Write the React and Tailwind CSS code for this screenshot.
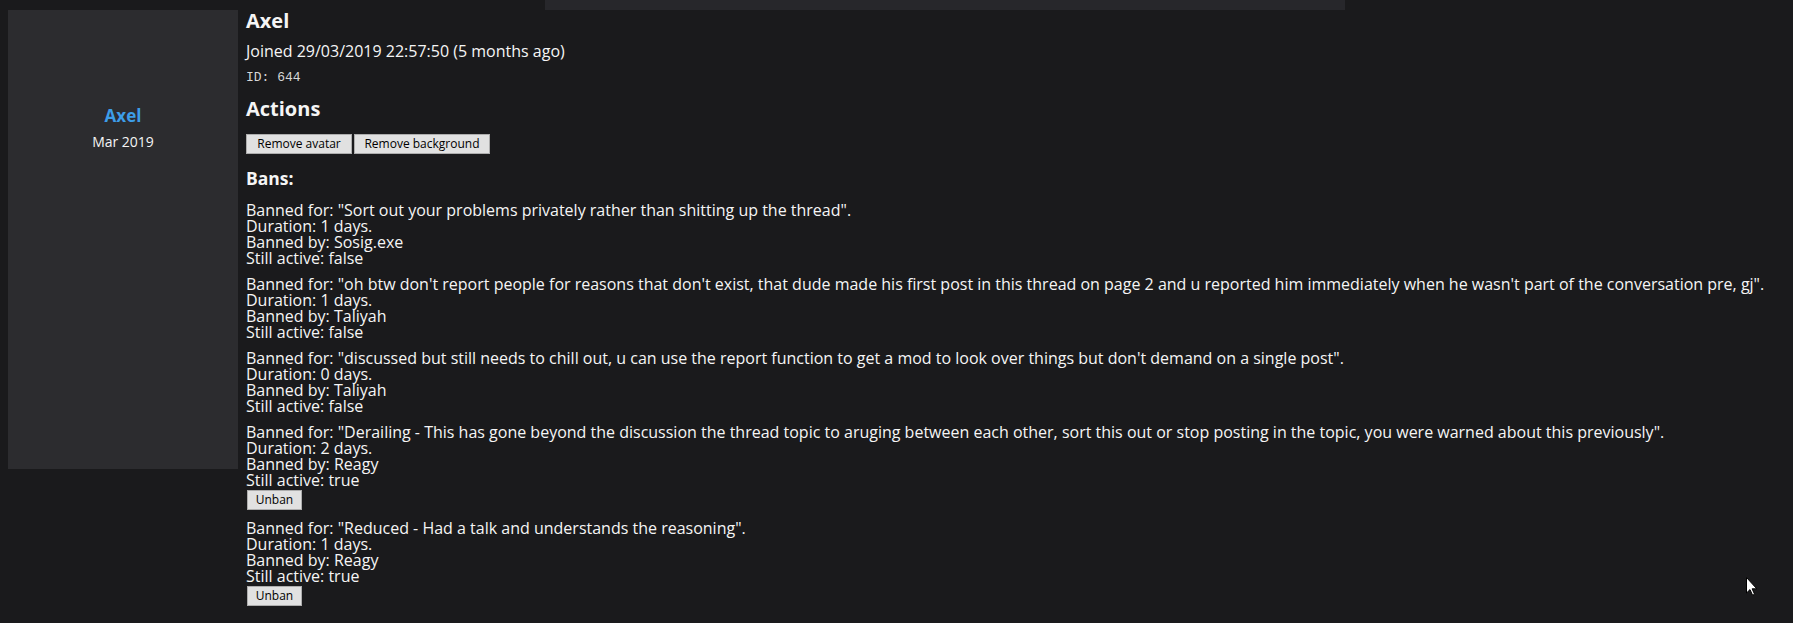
const bans = [
  {
    reason: "Sort out your problems privately rather than shitting up the thread",
    days: 1,
    by: "Sosig.exe",
    active: false,
  },
  {
    reason:
      "oh btw don't report people for reasons that don't exist, that dude made his first post in this thread on page 2 and u reported him immediately when he wasn't part of the conversation pre, gj",
    days: 1,
    by: "Taliyah",
    active: false,
  },
  {
    reason:
      "discussed but still needs to chill out, u can use the report function to get a mod to look over things but don't demand on a single post",
    days: 0,
    by: "Taliyah",
    active: false,
  },
  {
    reason:
      "Derailing - This has gone beyond the discussion the thread topic to aruging between each other, sort this out or stop posting in the topic, you were warned about this previously",
    days: 2,
    by: "Reagy",
    active: true,
  },
  {
    reason: "Reduced - Had a talk and understands the reasoning",
    days: 1,
    by: "Reagy",
    active: true,
  },
];

function Btn({ children, className = "" }) {
  return (
    <button
      className={
        "h-[20px] bg-[#e1e1e1] border border-[#adadad] text-black text-[12px] leading-none text-center " +
        className
      }
    >
      {children}
    </button>
  );
}

function Cursor() {
  return (
    <svg
      className="absolute left-[1746px] top-[577px]"
      width="12"
      height="19"
      viewBox="0 0 12 19"
    >
      <path
        d="M0.5 0.5 L0.5 16 L4 12.6 L6.6 18.2 L8.6 17.3 L6.1 11.8 L10.8 11.8 Z"
        fill="#fff"
        stroke="#000"
        strokeWidth="1"
      />
    </svg>
  );
}

export default function App() {
  return (
    <div className="relative w-[1793px] h-[623px] overflow-hidden bg-[#1a1a1c] text-[#f5f5f5] font-['Open_Sans',sans-serif]">
      {/* bottom edge of the box above */}
      <div className="ml-[545px] w-[800px] h-[10px] bg-[#27272b]" />

      <div className="flex items-start">
        {/* user card */}
        <div className="ml-[8px] w-[230px] h-[459px] bg-[#2c2c2f] flex flex-col items-center pt-[96px]">
          <div className="text-[17px] leading-[20px] font-bold text-[#3d9de8]">Axel</div>
          <div className="mt-[6px] text-[14px] leading-[20px]">Mar 2019</div>
        </div>

        <div className="ml-[8px] pt-[1px] flex flex-col items-start">
          <h2 className="text-[20px] leading-[20px] font-bold">Axel</h2>
          <p className="mt-[12px] text-[16px] leading-[16px]">
            Joined 29/03/2019 22:57:50 (5 months ago)
          </p>
          <p className="mt-[11px] text-[13px] leading-[16px] text-[#d6d6d6] font-['Liberation_Mono',monospace]">
            ID: 644
          </p>

          <h2 className="mt-[13px] text-[20px] leading-[20px] font-bold">Actions</h2>
          <div className="mt-[15px] flex gap-[2px]">
            <Btn className="w-[106px]">Remove avatar</Btn>
            <Btn className="w-[136px]">Remove background</Btn>
          </div>

          <h3 className="mt-[14px] text-[17.5px] leading-[20px] font-bold">Bans:</h3>

          <div className="mt-[14px] flex flex-col gap-[10px]">
            {bans.map((b, i) => (
              <div key={i} className="text-[16px] leading-[16px] whitespace-nowrap">
                <div>Banned for: "{b.reason}".</div>
                <div>Duration: {b.days} days.</div>
                <div>Banned by: {b.by}</div>
                <div>Still active: {b.active ? "true" : "false"}</div>
                {b.active && <Btn className="mt-[2px] ml-[1px] w-[55px]">Unban</Btn>}
              </div>
            ))}
          </div>
        </div>
      </div>

      <Cursor />
    </div>
  );
}
